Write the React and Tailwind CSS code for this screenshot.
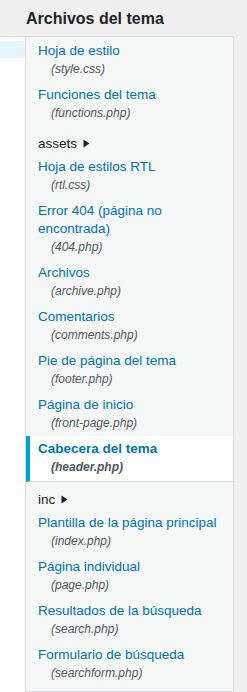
import React from 'react';

const files = [
  { title: 'Hoja de estilo', file: 'style.css' },
  { title: 'Funciones del tema', file: 'functions.php' },
  { dir: 'assets' },
  { title: 'Hoja de estilos RTL', file: 'rtl.css' },
  { title: 'Error 404 (página no encontrada)', file: '404.php' },
  { title: 'Archivos', file: 'archive.php' },
  { title: 'Comentarios', file: 'comments.php' },
  { title: 'Pie de página del tema', file: 'footer.php' },
  { title: 'Página de inicio', file: 'front-page.php' },
  { title: 'Cabecera del tema', file: 'header.php', active: true },
  { dir: 'inc' },
  { title: 'Plantilla de la página principal', file: 'index.php' },
  { title: 'Página individual', file: 'page.php' },
  { title: 'Resultados de la búsqueda', file: 'search.php' },
  { title: 'Formulario de búsqueda', file: 'searchform.php' },
];

function Arrow() {
  return (
    <svg width="7" height="9" viewBox="0 0 7 9" className="ml-[6px] inline-block">
      <polygon points="0.5,0.5 6.5,4.5 0.5,8.5" fill="#1d2327" />
    </svg>
  );
}

export default function App() {
  return (
    <div className="h-[692px] overflow-hidden bg-[#f0f0f1] font-['Liberation_Sans',Arial,sans-serif] flex flex-col">
      {/* header */}
      <div className="h-[36px] shrink-0 pl-[26px] pt-[9px]">
        <h2 className="text-[16px] leading-[20px] font-bold text-[#1d2327]">Archivos del tema</h2>
      </div>

      <div className="flex flex-1 min-h-0">
        {/* left editor edge */}
        <div className="w-[25px] shrink-0 bg-white border-t border-[#dcdcde] pt-[4px]">
          <div className="h-[17px] bg-[#e5f5fa]" />
        </div>

        {/* file list */}
        <div className="w-[209px] shrink-0 bg-[#f6f7f7] border border-[#dcdcde] pt-[1px]">
          <ul>
            {files.map((item, i) =>
              item.dir ? (
                <li key={i} className="h-[28px] pt-[7px] pl-[12px] text-[13.5px] leading-[18px] text-[#1d2327] flex items-center">
                  {item.dir}
                  <Arrow />
                </li>
              ) : (
                <li
                  key={i}
                  className={
                    item.active
                      ? 'bg-white border-l-4 border-l-[#00a0d2] border-b border-b-[#dcdcde] pt-1 pb-[5px] pl-[8px] pr-2'
                      : 'pt-1 pb-1 pl-[12px] pr-2'
                  }
                >
                  <div className={`text-[13.5px] leading-[18px] text-[#0073aa] ${item.active ? 'font-bold' : ''}`}>
                    {item.title}
                  </div>
                  <div className={`pl-[13px] text-[12px] leading-[18px] italic text-[#50575e] ${item.active ? 'font-bold' : ''}`}>
                    ({item.file})
                  </div>
                </li>
              )
            )}
          </ul>
        </div>

        <div className="flex-1" />
      </div>
    </div>
  );
}
